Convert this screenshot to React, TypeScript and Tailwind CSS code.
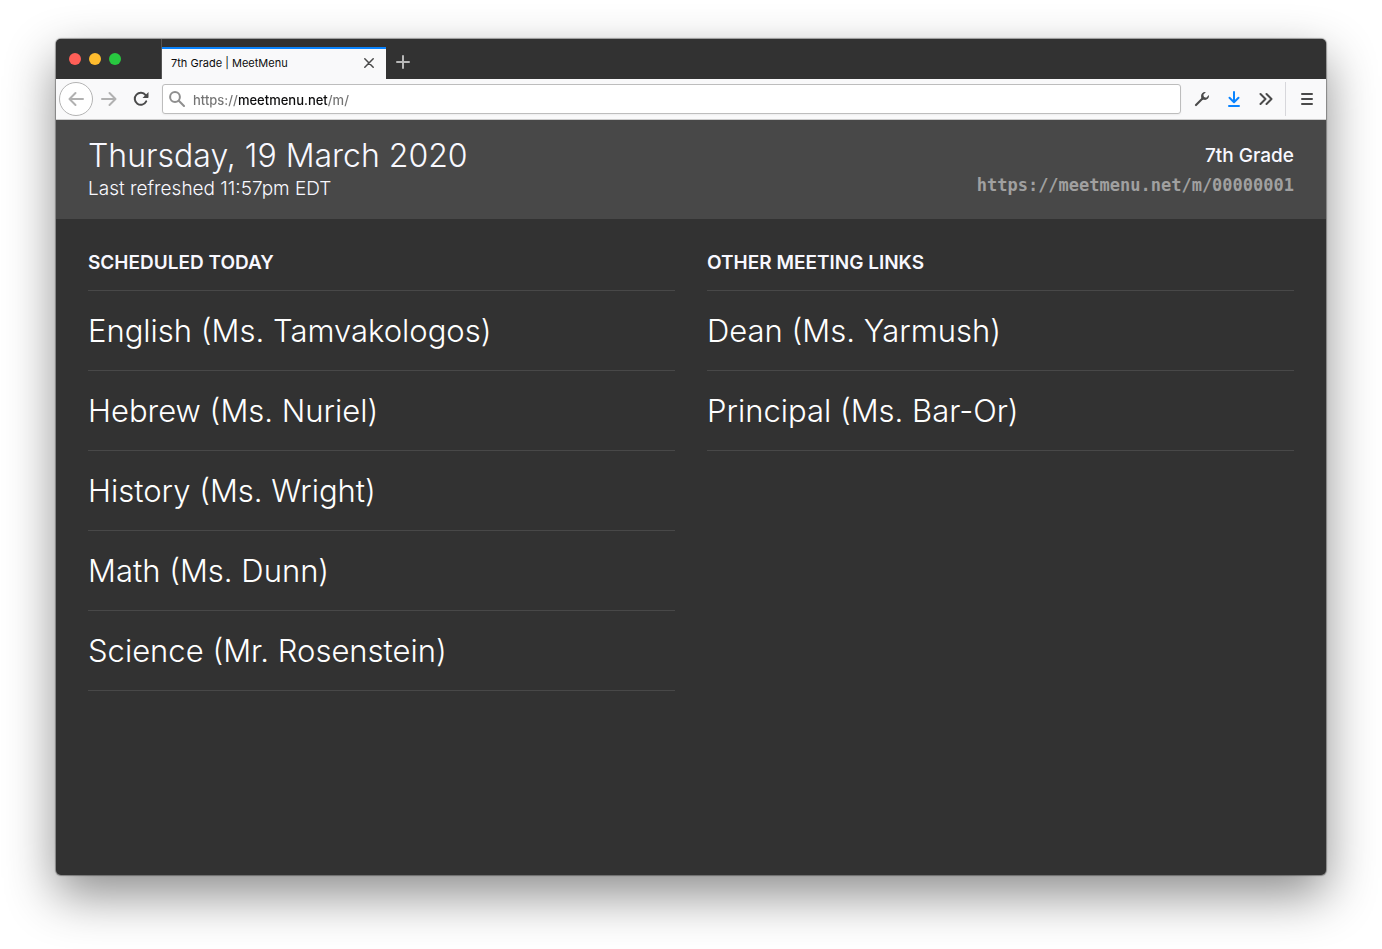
import React, { useState } from 'react';

interface Meeting {
	name: string
	href: string
}

const scheduledMeetings: Meeting[] = [
	{ name: "English (Ms. Tamvakologos)", href: "#english" },
	{ name: "Hebrew (Ms. Nuriel)", href: "#hebrew" },
	{ name: "History (Ms. Wright)", href: "#history" },
	{ name: "Math (Ms. Dunn)", href: "#math" },
	{ name: "Science (Mr. Rosenstein)", href: "#science" },
];

const otherMeetings: Meeting[] = [
	{ name: "Dean (Ms. Yarmush)", href: "#dean" },
	{ name: "Principal (Ms. Bar-Or)", href: "#principal" },
];

const TabBar: React.FC = () => {
	return (
		<div className="flex h-10 items-stretch bg-[#323232]">
			<div className="flex w-[105px] items-center gap-2 pl-[13px]">
				<button aria-label="Close window" className="h-3 w-3 rounded-full bg-[#ff5f57]" />
				<button aria-label="Minimize window" className="h-3 w-3 rounded-full bg-[#febc2e]" />
				<button aria-label="Zoom window" className="h-3 w-3 rounded-full bg-[#28c840]" />
			</div>
			<div className="flex border-l border-[#555555] pt-2">
				<div className="flex w-56 items-center justify-between border-t-2 border-[#0a84ff] bg-[#f9f9fa] pb-0.5 pl-[9px] pr-3 text-[11px] text-[#0c0c0d]">
					<span>7th Grade | MeetMenu</span>
					<button aria-label="Close tab">
						<svg className="h-[10px] w-[10px]" viewBox="0 0 10 10" fill="none" stroke="#4a4a4a" strokeWidth="1.5" strokeLinecap="round">
							<path d="M.8.8l8.4 8.4M9.2.8L.8 9.2" />
						</svg>
					</button>
				</div>
			</div>
			<button aria-label="New tab" className="flex w-[34px] items-center justify-center pt-1.5">
				<svg className="h-[14px] w-[14px]" viewBox="0 0 14 14" fill="none" stroke="#b8b8b8" strokeWidth="2" strokeLinecap="round">
					<path d="M7 1v12M1 7h12" />
				</svg>
			</button>
		</div>
	)
}

const Toolbar: React.FC = () => {
	const [url, setUrl] = useState("https://meetmenu.net/m/")

	return (
		<div className="flex h-[41px] items-center border-b border-[#cccccc] bg-[#f9f9fa]">
			<button aria-label="Back" className="ml-[3px] flex h-[34px] w-[34px] items-center justify-center rounded-full border border-[#b4b4b4] bg-white">
				<svg className="h-4 w-4" viewBox="0 0 16 16" fill="none" stroke="#b1b1b1" strokeWidth="2" strokeLinecap="round" strokeLinejoin="round">
					<path d="M15 8H1.5M7.5 2l-6 6 6 6" />
				</svg>
			</button>
			<button aria-label="Forward" className="flex w-8 items-center justify-center">
				<svg className="h-4 w-4" viewBox="0 0 16 16" fill="none" stroke="#b1b1b1" strokeWidth="2" strokeLinecap="round" strokeLinejoin="round">
					<path d="M1 8h13.5M8.5 2l6 6-6 6" />
				</svg>
			</button>
			<button aria-label="Reload" className="flex w-8 items-center justify-center">
				<svg className="h-4 w-4" viewBox="0 0 16 16" fill="none" stroke="#4a4a4a" strokeWidth="2">
					<path d="M13.2 10.4A6 6 0 1 1 12.6 4.2" strokeLinecap="round" />
					<path d="M15.5 1v5.3a.7.7 0 0 1-.7.7H9.5z" fill="#4a4a4a" stroke="none" />
				</svg>
			</button>
			<div className="ml-[5px] flex h-[30px] flex-1 items-center gap-2 rounded-[3px] border border-[#bdbdbd] bg-white pl-[6px] shadow-xs">
				<svg className="h-4 w-4 shrink-0" viewBox="0 0 16 16" fill="none" stroke="#8f8f8f" strokeWidth="2" strokeLinecap="round">
					<circle cx="6" cy="6" r="4.9" />
					<path d="M9.8 9.8L15 15" />
				</svg>
				{/* the host part of the address is darker than the scheme and path */}
				<input
					aria-label="Address"
					className="min-w-0 flex-1 bg-[linear-gradient(to_right,#737373_46px,#0c0c0d_46px,#0c0c0d_135px,#737373_135px)] bg-clip-text pt-[3px] text-[13px] font-medium text-transparent caret-black outline-none"
					value={url}
					onChange={(e) => { setUrl(e.target.value) }}
				/>
			</div>
			<div className="ml-[5px] flex items-center">
				<button aria-label="Developer tools" className="flex w-8 items-center justify-center">
					<svg className="h-4 w-4" viewBox="0 0 16 16" fill="none" stroke="#4a4a4a">
						<path d="M2 14l6.5-6.5" strokeWidth="2.2" strokeLinecap="round" />
						<path d="M11.9 1.100a4 4 0 0 0-4.700 4.900 2.500 2.500 0 0 0 2.800 2.800 4 4 0 0 0 4.900-4.700l-2.700 2.600-2.200-.7-.7-2.200z" fill="#4a4a4a" stroke="none" />
					</svg>
				</button>
				<button aria-label="Downloads" className="flex w-8 items-center justify-center">
					<svg className="h-4 w-4" viewBox="0 0 16 16" fill="none" stroke="#0a84ff" strokeWidth="2" strokeLinecap="round" strokeLinejoin="round">
						<path d="M8 1v10M3.5 6.7L8 11.2l4.5-4.5M3 15h10" />
					</svg>
				</button>
				<button aria-label="More tools" className="flex w-8 items-center justify-center">
					<svg className="h-4 w-4" viewBox="0 0 16 16" fill="none" stroke="#4a4a4a" strokeWidth="2" strokeLinecap="round" strokeLinejoin="round">
						<path d="M2.500 3l5 5-5 5M8.500 3l5 5-5 5" />
					</svg>
				</button>
			</div>
			<div className="ml-[3px] flex h-[34px] border-l border-[#d7d7db] pl-px">
				<button aria-label="Open menu" className="flex w-[39px] items-center justify-center">
					<svg className="h-4 w-4" viewBox="0 0 16 16" fill="none" stroke="#4a4a4a" strokeWidth="2" strokeLinecap="round">
						<path d="M3 3h10M3 8h10M3 13h10" />
					</svg>
				</button>
			</div>
		</div>
	)
}

const PageHeader: React.FC = () => {
	return (
		<header className="flex items-start justify-between bg-[#484848] px-8 py-4 text-[#f8f8ff]">
			<div className="pb-0.5">
				<h1 className="text-[32px] leading-10 font-light">Thursday, 19 March 2020</h1>
				<p className="text-[19px] leading-[25px] font-light">Last refreshed 11:57pm EDT</p>
			</div>
			<div className="pt-[5px] text-right">
				<p className="text-[19px] leading-[30px] font-medium">7th Grade</p>
				<a href="#00000001" className="block font-['DejaVu_Sans_Mono',monospace] text-[17px] leading-7 font-bold text-[#a0a0a0]">https://meetmenu.net/m/00000001</a>
			</div>
		</header>
	)
}

interface MeetingListProps {
	title: string
	meetings: Meeting[]
}
const MeetingList: React.FC<MeetingListProps> = ({ title, meetings }) => {
	return (
		<section className="flex-1">
			<h2 className="border-b border-[#484848] pb-[15px] text-[19px] leading-6 font-semibold text-[#f8f8ff] uppercase">{title}</h2>
			<ul>
				{meetings.map((meeting) => (
					<li key={meeting.name} className="flex h-20 items-center border-b border-[#484848]">
						<a href={meeting.href} className="text-[31px] leading-10 font-light text-white">{meeting.name}</a>
					</li>
				))}
			</ul>
		</section>
	)
}

const App: React.FC = () => {
	return (
		<div className="flex min-h-screen flex-col bg-white px-14 pt-[39px] pb-[74px] font-[Inter,sans-serif]">
			<div className="flex flex-1 flex-col overflow-hidden rounded-[5px] bg-[#323232] shadow-[0_0_1px_1px_rgba(0,0,0,0.35),0_20px_50px_rgba(0,0,0,0.45)]">
				<TabBar />
				<Toolbar />
				<PageHeader />
				<main className="flex flex-1 gap-8 px-8 pt-8">
					<MeetingList title="Scheduled today" meetings={scheduledMeetings} />
					<MeetingList title="Other meeting links" meetings={otherMeetings} />
				</main>
			</div>
		</div>
	)
}
export default App;
